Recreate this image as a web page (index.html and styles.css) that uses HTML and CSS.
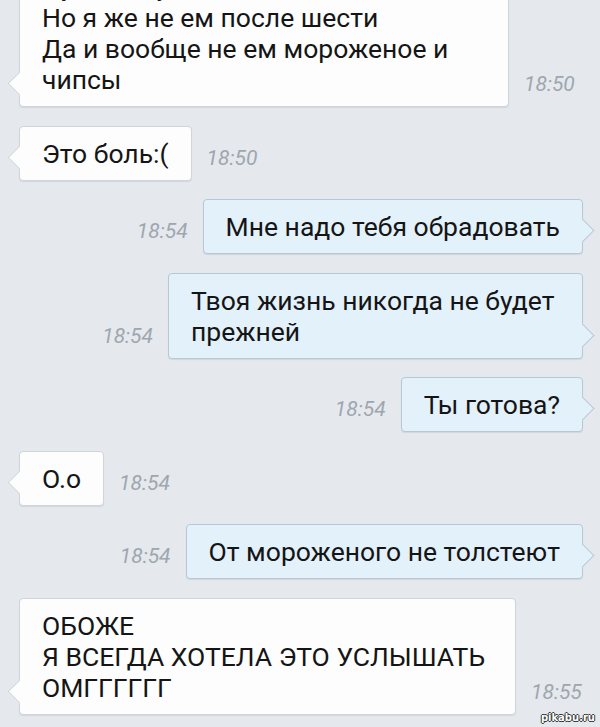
FILE: index.html
```html
<!DOCTYPE html>
<html lang="ru">
<head>
  <meta charset="UTF-8">
  <meta name="viewport" content="width=device-width, initial-scale=1.0">
  <title>Диалог</title>
  <link rel="stylesheet" href="styles.css">
</head>
<body>
  <div class="chat">
    <div class="row in">
      <div class="bubble narrow">Ну да, я худею<br>Но я же не ем после шести<br>Да и вообще не ем мороженое и чипсы</div>
      <span class="time">18:50</span>
    </div>
    <div class="row in">
      <div class="bubble">Это боль:(</div>
      <span class="time">18:50</span>
    </div>
    <div class="row out">
      <span class="time">18:54</span>
      <div class="bubble">Мне надо тебя обрадовать</div>
    </div>
    <div class="row out">
      <span class="time">18:54</span>
      <div class="bubble">Твоя жизнь никогда не будет прежней</div>
    </div>
    <div class="row out">
      <span class="time">18:54</span>
      <div class="bubble">Ты готова?</div>
    </div>
    <div class="row in">
      <div class="bubble">О.о</div>
      <span class="time">18:54</span>
    </div>
    <div class="row out">
      <span class="time">18:54</span>
      <div class="bubble">От мороженого не толстеют</div>
    </div>
    <div class="row in">
      <div class="bubble">ОБОЖЕ<br>Я ВСЕГДА ХОТЕЛА ЭТО УСЛЫШАТЬ ОМГГГГГГ</div>
      <span class="time">18:55</span>
    </div>
  </div>
  <div class="watermark">pikabu.ru</div>
</body>
</html>
```

FILE: styles.css
```css
:root {
  --bg: #e5e9ee;
  --in-bg: #fdfdfd;
  --in-border: #cfd5db;
  --out-bg: #e3f1fb;
  --out-border: #b6c8d6;
  --time: #9ea6ae;
}

html, body {
  height: 100%;
}

body {
  margin: 0;
  overflow: hidden;
  background: var(--bg);
  font-family: Roboto, "Noto Sans", sans-serif;
  position: relative;
}

.chat {
  display: flex;
  flex-direction: column;
  gap: 18.5px;
  padding: 0 17px 0 19px;
  margin-top: -41px;
}

.row {
  display: flex;
  align-items: flex-end;
  gap: 15px;
}

.row.out {
  justify-content: flex-end;
}

.bubble {
  position: relative;
  box-sizing: border-box;
  padding: 11px 22px;
  font-size: 26.5px;
  line-height: 31px;
  color: #151515;
  border-radius: 4px;
}

.bubble::before {
  content: "";
  position: absolute;
  bottom: 14px;
  width: 16px;
  height: 16px;
  transform: rotate(45deg);
}

.in .bubble {
  max-width: 497px;
  background: var(--in-bg);
  border: 1px solid var(--in-border);
  box-shadow: 0 1px 1px rgba(0, 0, 0, 0.08);
}

.in .bubble.narrow {
  max-width: 490px;
}

.in .bubble::before {
  left: -9px;
  background: var(--in-bg);
  border-left: 1px solid var(--in-border);
  border-bottom: 1px solid var(--in-border);
}

.out .bubble {
  max-width: 415px;
  background: var(--out-bg);
  border: 1px solid var(--out-border);
  box-shadow: 0 1px 1px rgba(0, 0, 0, 0.08);
}

.out .bubble::before {
  right: -9px;
  background: var(--out-bg);
  border-top: 1px solid var(--out-border);
  border-right: 1px solid var(--out-border);
}

.time {
  font-size: 21px;
  font-style: italic;
  line-height: 24px;
  color: var(--time);
  margin-bottom: 11px;
  white-space: nowrap;
}

.watermark {
  position: absolute;
  right: 5px;
  bottom: 4px;
  font-family: "DejaVu Sans", sans-serif;
  font-size: 10px;
  font-weight: bold;
  color: #fff;
  text-shadow: -1px 0 #333, 1px 0 #333, 0 -1px #333, 0 1px #333;
}
```
